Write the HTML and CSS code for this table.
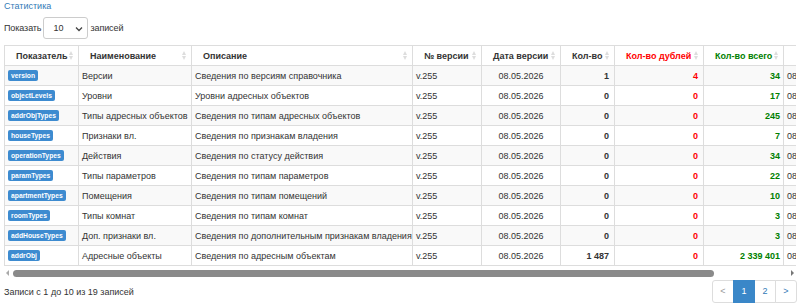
FILE: index.html
```
<!DOCTYPE html>
<html lang="ru">
<head>
<meta charset="utf-8">
<title>Статистика</title>
<link rel="stylesheet" href="styles.css">
</head>
<body>
<a class="title" href="#">Статистика</a>
<div class="length">
  <span>Показать</span>
  <span class="select-wrap">
    <select class="select"><option>10</option><option>25</option><option>50</option></select>
    <svg class="chev" width="8" height="6" viewBox="0 0 8 6"><path d="M1 1.5 L4 4.5 L7 1.5" fill="none" stroke="#444" stroke-width="1.3"/></svg>
  </span>
  <span>записей</span>
</div>
<div class="scroller">
<table class="grid">
  <colgroup>
    <col class="c1"><col class="c2"><col class="c3"><col class="c4"><col class="c5"><col class="c6"><col class="c7"><col class="c8"><col class="c9">
  </colgroup>
  <thead>
    <tr>
      <th class="sort">Показатель</th>
      <th class="sort">Наименование</th>
      <th class="sort">Описание</th>
      <th class="sort">№ версии</th>
      <th class="sort">Дата версии</th>
      <th class="sort">Кол-во</th>
      <th class="sort red">Кол-во дублей</th>
      <th class="sort green">Кол-во всего</th>
      <th class="sort last">Дата обновления</th>
    </tr>
  </thead>
  <tbody>
    <tr><td><span class="badge">version</span></td><td>Версии</td><td>Сведения по версиям справочника</td><td>v.255</td><td class="c">08.05.2026</td><td class="n">1</td><td class="n red">4</td><td class="n green">34</td><td>08.05.2026</td></tr>
    <tr><td><span class="badge">objectLevels</span></td><td>Уровни</td><td>Уровни адресных объектов</td><td>v.255</td><td class="c">08.05.2026</td><td class="n">0</td><td class="n red">0</td><td class="n green">17</td><td>08.05.2026</td></tr>
    <tr><td><span class="badge">addrObjTypes</span></td><td>Типы адресных объектов</td><td>Сведения по типам адресных объектов</td><td>v.255</td><td class="c">08.05.2026</td><td class="n">0</td><td class="n red">0</td><td class="n green">245</td><td>08.05.2026</td></tr>
    <tr><td><span class="badge">houseTypes</span></td><td>Признаки вл.</td><td>Сведения по признакам владения</td><td>v.255</td><td class="c">08.05.2026</td><td class="n">0</td><td class="n red">0</td><td class="n green">7</td><td>08.05.2026</td></tr>
    <tr><td><span class="badge">operationTypes</span></td><td>Действия</td><td>Сведения по статусу действия</td><td>v.255</td><td class="c">08.05.2026</td><td class="n">0</td><td class="n red">0</td><td class="n green">34</td><td>08.05.2026</td></tr>
    <tr><td><span class="badge">paramTypes</span></td><td>Типы параметров</td><td>Сведения по типам параметров</td><td>v.255</td><td class="c">08.05.2026</td><td class="n">0</td><td class="n red">0</td><td class="n green">22</td><td>08.05.2026</td></tr>
    <tr><td><span class="badge">apartmentTypes</span></td><td>Помещения</td><td>Сведения по типам помещений</td><td>v.255</td><td class="c">08.05.2026</td><td class="n">0</td><td class="n red">0</td><td class="n green">10</td><td>08.05.2026</td></tr>
    <tr><td><span class="badge">roomTypes</span></td><td>Типы комнат</td><td>Сведения по типам комнат</td><td>v.255</td><td class="c">08.05.2026</td><td class="n">0</td><td class="n red">0</td><td class="n green">3</td><td>08.05.2026</td></tr>
    <tr><td><span class="badge">addHouseTypes</span></td><td>Доп. признаки вл.</td><td>Сведения по дополнительным признакам владения</td><td>v.255</td><td class="c">08.05.2026</td><td class="n">0</td><td class="n red">0</td><td class="n green">3</td><td>08.05.2026</td></tr>
    <tr><td><span class="badge">addrObj</span></td><td>Адресные объекты</td><td>Сведения по адресным объектам</td><td>v.255</td><td class="c">08.05.2026</td><td class="n">1 487</td><td class="n red">0</td><td class="n green">2 339 401</td><td>08.05.2026</td></tr>
  </tbody>
</table>
</div>
<div class="hscroll">
  <span class="arrow left"></span>
  <div class="track"><div class="thumb"></div></div>
  <span class="arrow right"></span>
</div>
<div class="footer">
  <div class="info">Записи с 1 до 10 из 19 записей</div>
  <ul class="pager">
    <li class="disabled"><a href="#">&lt;</a></li>
    <li class="active"><a href="#">1</a></li>
    <li><a href="#">2</a></li>
    <li><a href="#">&gt;</a></li>
  </ul>
</div>
</body>
</html>
```
FILE: styles.css
```
* { box-sizing: border-box; }
html, body { margin: 0; background: #fff; }
body {
  padding: 0 4px;
  font-family: "Liberation Sans", Arial, sans-serif;
  font-size: 9px;
  line-height: 12px;
  color: #333;
  width: 800px;
  height: 304px;
  overflow: hidden;
}
.title {
  display: block;
  color: #337ab7;
  text-decoration: none;
  height: 12px;
  line-height: 12px;
}
.length {
  display: flex;
  align-items: center;
  gap: 2px;
  margin-top: 5px;
  height: 22px;
  letter-spacing: -0.1px;
}
.select-wrap { position: relative; display: inline-block; height: 22px; }
.select {
  appearance: none;
  -webkit-appearance: none;
  width: 45px;
  height: 22px;
  border: 1px solid #ccc;
  border-radius: 3px;
  background: #fff;
  padding: 0 0 0 9px;
  font-family: inherit;
  font-size: 9px;
  color: #333;
}
.chev { position: absolute; right: 5px; top: 9px; pointer-events: none; }
.scroller {
  margin-top: 6px;
  width: 792px;
  overflow: hidden;
}
.grid {
  table-layout: fixed;
  width: 865px;
  border-collapse: collapse;
  border: 1px solid #ddd;
}
.c1 { width: 74px; } .c2 { width: 113px; } .c3 { width: 221px; } .c4 { width: 69px; }
.c5 { width: 79px; } .c6 { width: 54px; } .c7 { width: 89px; } .c8 { width: 80px; } .c9 { width: 86px; }
th, td {
  border: 1px solid #ddd;
  height: 20px;
  line-height: 12px;
  white-space: nowrap;
  overflow: hidden;
}
th {
  position: relative;
  text-align: left;
  font-weight: bold;
  padding: 3px 10px 3px 11px;
  color: #333;
  background: #fff;
}
th.last { padding-left: 20px; }
td { padding: 3px 3px 3px 3px; }
th.sort::before, th.sort::after {
  content: "";
  position: absolute;
  right: 5px;
  border-left: 2.5px solid transparent;
  border-right: 2.5px solid transparent;
}
th.sort::before { top: 5px; border-bottom: 4px solid #ddd; }
th.sort::after { top: 10px; border-top: 4px solid #ddd; }
tbody tr:nth-child(odd) td { background: #f9f9f9; }
td.c { text-align: center; }
td.n { text-align: right; font-weight: bold; padding-right: 5px; }
td.n.green { padding-right: 3px; }
.red { color: #f00 !important; }
.green { color: #008000 !important; }
.badge {
  display: inline-block;
  background: #3d8bd0;
  color: #fff;
  font-size: 6.75px;
  font-weight: bold;
  line-height: 11px;
  padding: 0 3px;
  border-radius: 2px;
  vertical-align: 1px;
}
.hscroll {
  display: flex;
  align-items: center;
  width: 792px;
  height: 12px;
  margin-top: 1px;
}
.arrow {
  width: 0; height: 0;
  border-top: 3px solid transparent;
  border-bottom: 3px solid transparent;
}
.arrow.left { border-right: 3px solid #aaa; margin: 0 4px 0 2px; }
.arrow.right { border-left: 3px solid #777; margin: 0 2px 0 4px; }
.track { flex: 1; height: 7px; }
.thumb { width: 701px; height: 7px; background: #8a8a8a; border-radius: 4px; }
.footer {
  display: flex;
  justify-content: space-between;
  align-items: center;
  margin-top: 1px;
  width: 793px;
}
.pager {
  display: flex;
  list-style: none;
  margin: 0;
  padding: 0;
}
.pager li a {
  display: block;
  width: 22px;
  height: 23px;
  line-height: 21px;
  text-align: center;
  border: 1px solid #ddd;
  margin-left: -1px;
  color: #337ab7;
  text-decoration: none;
  font-size: 9px;
  background: #fff;
}
.pager li:first-child a { border-radius: 3px 0 0 3px; margin-left: 0; }
.pager li:last-child a { border-radius: 0 3px 3px 0; }
.pager li.disabled a { color: #999; }
.pager li.active a { background: #3a87c8; border-color: #3a87c8; color: #fff; position: relative; z-index: 1; }
```
